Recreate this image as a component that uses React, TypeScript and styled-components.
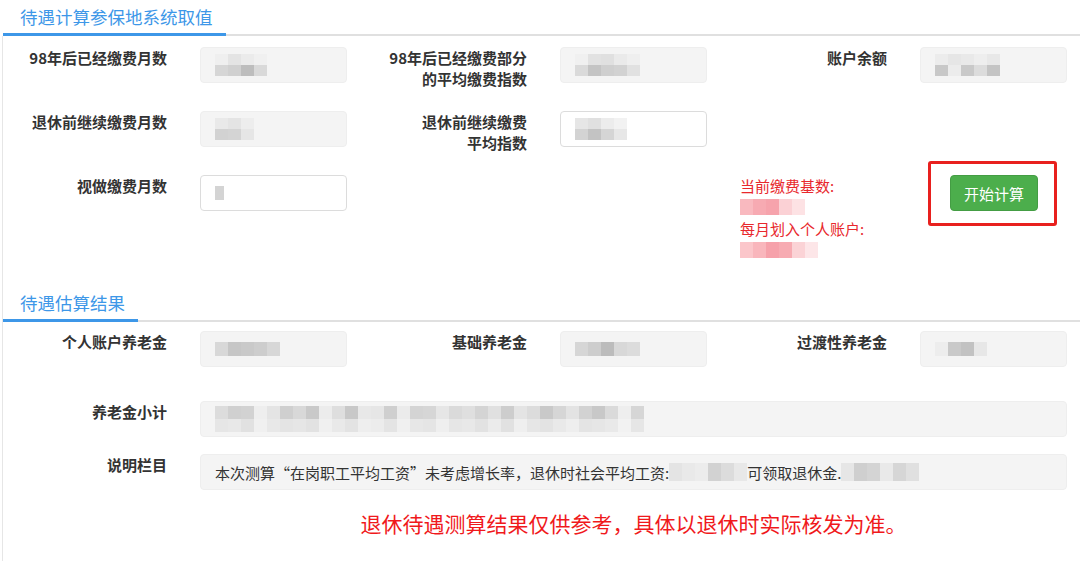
import React from "react";
import styled, { createGlobalStyle } from "styled-components";

const GlobalStyle = createGlobalStyle`
  html, body { margin: 0; padding: 0; background: #fff; }
  body {
    font-family: "Noto Sans CJK SC", "Noto Sans", sans-serif;
    color: #333;
  }
`;

const Page = styled.div`
  width: 1080px;
  height: 561px;
  overflow: hidden;
  background: linear-gradient(#e6e6e6, #e6e6e6) 2px 36px / 1px 100% no-repeat;
`;

const SectionHeader = styled.div<{ $top?: number }>`
  display: flex;
  align-items: flex-end;
  margin-left: 3px;
  margin-top: ${(p) => p.$top ?? 0}px;
  box-shadow: inset 0 -2px 0 #e0e0e0;
`;

const SectionTitle = styled.div`
  font-size: 17.5px;
  line-height: 33px;
  color: #3d97e8;
  padding: 0 13px 0 17px;
  border-bottom: 3px solid #3d97e8;
`;

const FieldGrid = styled.div<{ $top: number; $gap?: number }>`
  display: grid;
  grid-template-columns: repeat(3, 360px);
  row-gap: ${(p) => p.$gap ?? 22}px;
  margin-top: ${(p) => p.$top}px;
`;

const Field = styled.div`
  display: grid;
  grid-template-columns: 167px 147px;
  column-gap: 33px;
  align-items: start;
`;

const WideField = styled.div<{ $top: number }>`
  display: grid;
  grid-template-columns: 167px 867px;
  column-gap: 33px;
  align-items: start;
  margin-top: ${(p) => p.$top}px;
`;

const Label = styled.div`
  text-align: right;
  font-size: 15px;
  font-weight: 700;
  line-height: 21px;
  color: #333;
`;

const Input = styled.div<{ $white?: boolean }>`
  box-sizing: border-box;
  height: 36px;
  display: flex;
  align-items: center;
  padding: 0 14px;
  border-radius: 4px;
  border: 1px solid ${(p) => (p.$white ? "#dcdcdc" : "#eeeeee")};
  background: ${(p) => (p.$white ? "#fff" : "#f4f4f4")};
  font-size: 15px;
  color: #333;
  white-space: nowrap;
  overflow: hidden;
`;

const MosaicBox = styled.span`
  display: inline-grid;
  grid-auto-flow: row;
  vertical-align: middle;
  filter: blur(0.6px);
`;

const MosaicRow = styled.span`
  display: flex;
`;

const MosaicCell = styled.span<{ $w: number; $h: number }>`
  display: block;
  width: ${(p) => p.$w}px;
  height: ${(p) => p.$h}px;
`;

function Mosaic({ rows, w = 13, h = 11 }: { rows: string[][]; w?: number; h?: number }) {
  return (
    <MosaicBox>
      {rows.map((r, i) => (
        <MosaicRow key={i}>
          {r.map((c, j) => (
            <MosaicCell key={j} $w={w} $h={h} style={{ background: c }} />
          ))}
        </MosaicRow>
      ))}
    </MosaicBox>
  );
}

const RedInfo = styled.div`
  font-size: 15px;
  line-height: 21.5px;
  color: #e8282d;
  margin-left: 20px;
  white-space: nowrap;
`;

const InfoValue = styled.div`
  height: 21.5px;
  display: flex;
  align-items: center;
`;

const HighlightBox = styled.div`
  width: fit-content;
  margin: -14px 0 0 8px;
  padding: 11px 16px 12px 19px;
  border: 3px solid #e8201e;
  border-radius: 3px;
`;

const CalcButton = styled.button`
  width: 88px;
  height: 36px;
  border: 1px solid #449d44;
  border-radius: 4px;
  background: #4cae4c;
  color: #fff;
  font-family: "Noto Sans CJK SC", sans-serif;
  font-size: 15px;
  cursor: pointer;
  padding: 0;
`;

const DescText = styled.span`
  font-size: 15px;
  color: #333;
`;

const Note = styled.div`
  grid-column: 2;
  text-align: center;
  font-size: 21px;
  line-height: 28px;
  color: #f0191c;
`;

const grey1 = [
  ["#efefef", "#e4e4e4", "#ebebeb", "#f0f0f0"],
  ["#d6d6d6", "#d0d0d0", "#bdbdbd", "#d9d9d9"],
];
const grey2 = [
  ["#f0f0f0", "#e2e2e2", "#e0e0e0", "#eaeaea", "#efefef"],
  ["#dadada", "#c4c4c4", "#cfcfcf", "#d2d2d2", "#e1e1e1"],
];
const grey3 = [
  ["#ececec", "#e6e6e6", "#e9e9e9", "#eeeeee", "#e8e8e8"],
  ["#c8c8c8", "#ececec", "#c9c9c9", "#dcdcdc", "#c4c4c4"],
];
const grey4 = [
  ["#e9e9e9", "#e4e4e4", "#ededed"],
  ["#d2d2d2", "#d4d4d4", "#e6e6e6"],
];
const grey5 = [
  ["#e6e6e6", "#e0e0e0", "#ececec", "#f2f2f2"],
  ["#d3d3d3", "#c3c3c3", "#d5d5d5", "#e7e7e7"],
];
const greyOne = [["#d4d4d4"]];
const greyBar = [["#d8d8d8", "#c6c6c6", "#c9c9c9", "#cdcdcd", "#d7d7d7"]];
const greyBar2 = [["#d6d6d6", "#cdcdcd", "#bcbcbc", "#d8d8d8", "#dcdcdc"]];
const greyBar3 = [["#ededed", "#c9c9c9", "#c2c2c2", "#e7e7e7"]];
const greyWide = [
  [
    "#dcdcdc", "#d0d0d0", "#d2d2d2", "#eeeeee", "#e4e4e4", "#cfcfcf", "#d8d8d8", "#c9c9c9",
    "#ececec", "#dedede", "#c8c8c8", "#e8e8e8", "#e6e6e6", "#cfcfcf", "#ebebeb", "#d4d4d4",
    "#d6d6d6", "#e6e6e6", "#dadada", "#dfdfdf", "#d4d4d4", "#e0e0e0", "#cdcdcd", "#e4e4e4",
    "#dcdcdc", "#c9c9c9", "#d6d6d6", "#e3e3e3", "#d2d2d2", "#c8c8c8", "#dadada", "#eeeeee",
    "#d6d6d6",
  ],
  [
    "#e6e6e6", "#e8e8e8", "#e1e1e1", "#f0f0f0", "#e8e8e8", "#e4e4e4", "#e6e6e6", "#e2e2e2",
    "#f0f0f0", "#e9e9e9", "#e3e3e3", "#eeeeee", "#ececec", "#e4e4e4", "#f0f0f0", "#e7e7e7",
    "#e5e5e5", "#efefef", "#e6e6e6", "#e8e8e8", "#e2e2e2", "#ebebeb", "#e1e1e1", "#efefef",
    "#e6e6e6", "#e3e3e3", "#e9e9e9", "#eeeeee", "#e4e4e4", "#e6e6e6", "#e9e9e9", "#f2f2f2",
    "#e6e6e6",
  ],
];
const descBlur1 = [["#e4e4e4", "#e9e9e9", "#ececec", "#d2d2d2", "#dcdcdc", "#e8e8e8"]];
const descBlur2 = [["#e6e6e6", "#cfcfcf", "#d4d4d4", "#e9e9e9", "#d6d6d6", "#e0e0e0"]];
const pink1 = [["#f9b9bf", "#f7aab2", "#f6a3ac", "#fbd1d5", "#fde2e4"]];
const pink2 = [["#fbc6ca", "#f9b6bc", "#f6a1aa", "#f7abb2", "#fbd3d6", "#fde6e8"]];

export default function App() {
  return (
    <Page>
      <GlobalStyle />
      <SectionHeader>
        <SectionTitle>待遇计算参保地系统取值</SectionTitle>
      </SectionHeader>

      <FieldGrid $top={11}>
        <Field>
          <Label>98年后已经缴费月数</Label>
          <Input>
            <Mosaic rows={grey1} />
          </Input>
        </Field>
        <Field>
          <Label>
            98年后已经缴费部分
            <br />
            的平均缴费指数
          </Label>
          <Input>
            <Mosaic rows={grey2} />
          </Input>
        </Field>
        <Field>
          <Label>账户余额</Label>
          <Input>
            <Mosaic rows={grey3} />
          </Input>
        </Field>

        <Field>
          <Label>退休前继续缴费月数</Label>
          <Input>
            <Mosaic rows={grey4} />
          </Input>
        </Field>
        <Field>
          <Label>
            退休前继续缴费
            <br />
            平均指数
          </Label>
          <Input $white>
            <Mosaic rows={grey5} />
          </Input>
        </Field>
        <div />

        <Field>
          <Label>视做缴费月数</Label>
          <Input $white>
            <Mosaic rows={greyOne} w={9} h={14} />
          </Input>
        </Field>
        <div />
        <Field>
          <RedInfo>
            当前缴费基数:
            <InfoValue>
              <Mosaic rows={pink1} w={13} h={16} />
            </InfoValue>
            每月划入个人账户:
            <InfoValue>
              <Mosaic rows={pink2} w={13} h={16} />
            </InfoValue>
          </RedInfo>
          <HighlightBox>
            <CalcButton type="button">开始计算</CalcButton>
          </HighlightBox>
        </Field>
      </FieldGrid>

      <SectionHeader $top={25}>
        <SectionTitle>待遇估算结果</SectionTitle>
      </SectionHeader>

      <FieldGrid $top={9}>
        <Field>
          <Label>个人账户养老金</Label>
          <Input>
            <Mosaic rows={greyBar} w={13} h={14} />
          </Input>
        </Field>
        <Field>
          <Label>基础养老金</Label>
          <Input>
            <Mosaic rows={greyBar2} w={13} h={14} />
          </Input>
        </Field>
        <Field>
          <Label>过渡性养老金</Label>
          <Input>
            <Mosaic rows={greyBar3} w={13} h={14} />
          </Input>
        </Field>
      </FieldGrid>

      <WideField $top={34}>
        <Label>养老金小计</Label>
        <Input>
          <Mosaic rows={greyWide} w={13} h={13} />
        </Input>
      </WideField>

      <WideField $top={17}>
        <Label>说明栏目</Label>
        <Input>
          <DescText>本次测算“在岗职工平均工资”未考虑增长率，退休时社会平均工资:</DescText>
          <Mosaic rows={descBlur1} w={13} h={18} />
          <DescText>可领取退休金.</DescText>
          <Mosaic rows={descBlur2} w={13} h={18} />
        </Input>
      </WideField>

      <WideField $top={19}>
        <Note>退休待遇测算结果仅供参考，具体以退休时实际核发为准。</Note>
      </WideField>
    </Page>
  );
}
